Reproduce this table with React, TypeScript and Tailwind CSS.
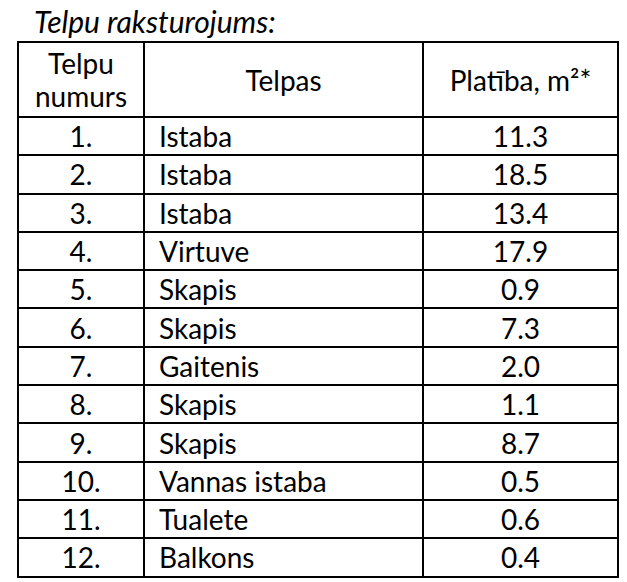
const rows: [string, string, string][] = [
  ["1.", "Istaba", "11.3"],
  ["2.", "Istaba", "18.5"],
  ["3.", "Istaba", "13.4"],
  ["4.", "Virtuve", "17.9"],
  ["5.", "Skapis", "0.9"],
  ["6.", "Skapis", "7.3"],
  ["7.", "Gaitenis", "2.0"],
  ["8.", "Skapis", "1.1"],
  ["9.", "Skapis", "8.7"],
  ["10.", "Vannas istaba", "0.5"],
  ["11.", "Tualete", "0.6"],
  ["12.", "Balkons", "0.4"],
];

export default function App() {
  return (
    <div className="min-h-screen bg-white text-black font-['Lato',sans-serif]">
      <p className="h-[41px] pl-[34px] pt-[5px] text-[30px] leading-[32px] italic">
        Telpu raksturojums:
      </p>
      <table className="ml-[17px] w-[600px] table-fixed border-collapse text-[28px]">
        <colgroup>
          <col className="w-[126px]" />
          <col className="w-[279px]" />
          <col className="w-[195px]" />
        </colgroup>
        <thead>
          <tr className="h-[75px]">
            <th className="border-2 border-black p-0 text-center font-normal leading-[33px]">
              Telpu
              <br />
              numurs
            </th>
            <th className="border-2 border-black p-0 text-center font-normal">Telpas</th>
            <th className="border-2 border-black p-0 text-center font-normal">Platība, m²*</th>
          </tr>
        </thead>
        <tbody>
          {rows.map(([nr, name, area]) => (
            <tr key={nr} className="h-[38.3px]">
              <td className="border-2 border-black p-0 text-center leading-none">{nr}</td>
              <td className="border-2 border-black p-0 pl-[14px] leading-none">{name}</td>
              <td className="border-2 border-black p-0 text-center leading-none">{area}</td>
            </tr>
          ))}
        </tbody>
      </table>
    </div>
  );
}
